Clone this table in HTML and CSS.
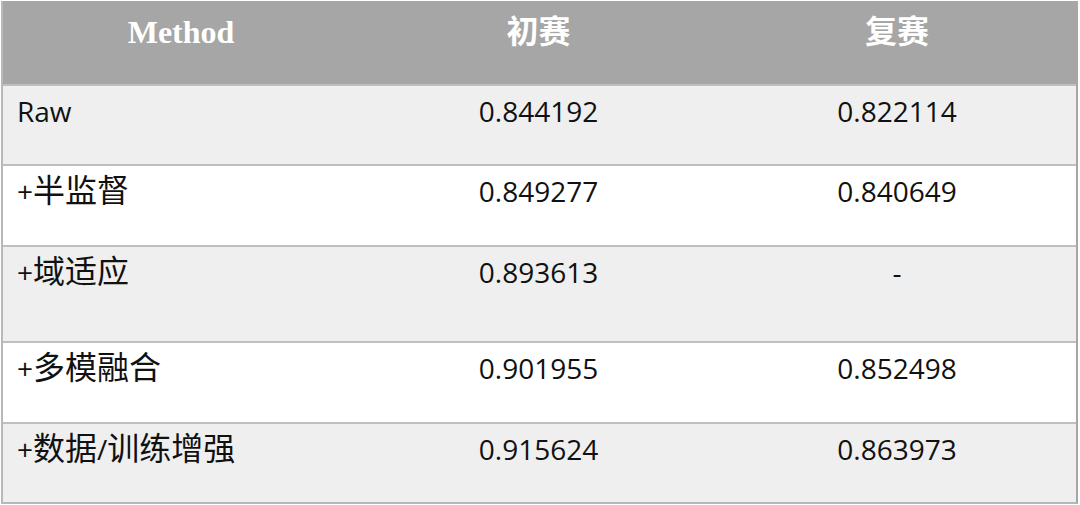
FILE: index.html
```html
<!DOCTYPE html>
<html lang="zh">
<head>
<meta charset="utf-8">
<title>Results</title>
<link rel="stylesheet" href="styles.css">
</head>
<body>
<div class="table">
  <div class="row head">
    <div class="cell c"><span class="en-h">Method</span></div>
    <div class="cell c"><span class="zh-h">初赛</span></div>
    <div class="cell c"><span class="zh-h">复赛</span></div>
  </div>
  <div class="row odd r80">
    <div class="cell l">Raw</div>
    <div class="cell c">0.844192</div>
    <div class="cell c">0.822114</div>
  </div>
  <div class="row even r81">
    <div class="cell l">+<span class="zh">半监督</span></div>
    <div class="cell c">0.849277</div>
    <div class="cell c">0.840649</div>
  </div>
  <div class="row odd r96">
    <div class="cell l">+<span class="zh">域适应</span></div>
    <div class="cell c">0.893613</div>
    <div class="cell c">-</div>
  </div>
  <div class="row even r81">
    <div class="cell l">+<span class="zh">多模融合</span></div>
    <div class="cell c">0.901955</div>
    <div class="cell c">0.852498</div>
  </div>
  <div class="row odd r80">
    <div class="cell l">+<span class="zh">数据</span>/<span class="zh">训练增强</span></div>
    <div class="cell c">0.915624</div>
    <div class="cell c">0.863973</div>
  </div>
</div>
</body>
</html>
```

FILE: styles.css
```css
html, body {
  margin: 0;
  padding: 0;
  background: #ffffff;
}

.table {
  margin: 1px 0 0 1px;
  width: 1077px;
  border-left: 2px solid #b8b8b8;
  border-right: 2px solid #a6a6a6;
  border-bottom: 2px solid #b8b8b8;
  box-sizing: border-box;
  font-family: "Open Sans", "Noto Sans CJK SC", sans-serif;
  font-size: 28px;
  color: #111111;
}

.row {
  display: grid;
  grid-template-columns: 356px 359px 1fr;
  box-sizing: border-box;
}

.head {
  height: 83px;
  background: #a6a6a6;
  color: #ffffff;
}

.odd { background: #efefef; border-top: 2px solid #bfbfbf; }
.even { background: #ffffff; border-top: 2px solid #bfbfbf; }

.r80 { height: 80px; }
.r81 { height: 81px; }
.r96 { height: 96px; }

.cell {
  line-height: 38px;
  padding-top: 6px;
  white-space: nowrap;
}

.head .cell {
  line-height: 40px;
  padding-top: 11px;
}

.l { padding-left: 14px; text-align: left; }
.c { text-align: center; }

.zh {
  font-family: "Noto Sans CJK SC", sans-serif;
  font-size: 32px;
  line-height: 30px;
}

.en-h {
  font-family: "Liberation Serif", serif;
  font-weight: bold;
  font-size: 32px;
}

.zh-h {
  font-family: "Noto Sans CJK SC", sans-serif;
  font-weight: bold;
  font-size: 32px;
  line-height: 30px;
}
```
